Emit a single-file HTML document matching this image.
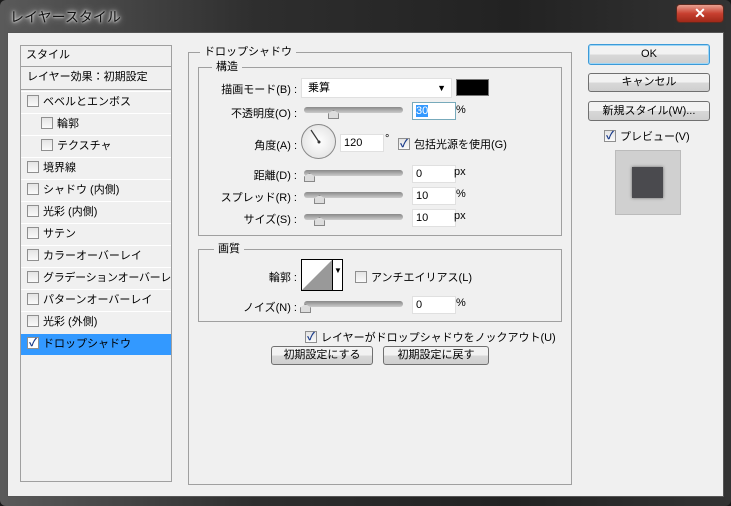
<!DOCTYPE html>
<html><head><meta charset="utf-8"><style>
*{margin:0;padding:0;box-sizing:border-box}
body{width:731px;height:506px;overflow:hidden;background:#1a1a1a;font-family:"Liberation Sans","Noto Sans CJK JP",sans-serif;font-size:11px;color:#000;position:relative;white-space:nowrap}
.a{position:absolute}
.win{left:0;top:0;width:731px;height:506px;background:linear-gradient(90deg,#5a5a5a 0,#2e2e2e 35%,#222 70%,#333 100%);border-radius:6px}
.client{left:7px;top:32px;width:717px;height:465px;background:#f0f0f0;border:1px solid #555}
.title{left:10px;top:7px;font-size:14px;color:#111;text-shadow:0 0 8px #ddd,0 0 4px #eee,0 0 2px #fff}
.close{left:676px;top:4px;width:48px;height:19px;background:linear-gradient(#e8a090,#c84030 50%,#a02818);border:1px solid #5a2a20;border-radius:4px;color:#fff;font-weight:bold;text-align:center;font-size:14px;line-height:17px}
.box{border:1px solid #a0a0a0}
.row{left:21px;width:150px;height:22px;border-top:1px solid #fff;line-height:21px;overflow:hidden}
.cb{display:inline-block;width:12px;height:12px;border:1px solid #8f8f8f;background:linear-gradient(#e4e4e4,#fafafa);vertical-align:middle;margin-right:4px;position:relative;top:-1px;font-size:11px;line-height:10px;text-align:center;color:#1a3b8a;font-weight:bold}
.lbl{text-align:right;width:120px}
.in{background:#fff;border:1px solid #e0e0e0;height:18px;width:44px;line-height:16px;padding-left:3px}
.sl{height:6px;border-radius:3px;background:linear-gradient(#888,#ccc);width:99px}
.th{width:11px;height:9px;background:#ddd;border:1px solid #888;border-radius:2px 2px 0 0;clip-path:polygon(50% 0,100% 40%,100% 100%,0 100%,0 40%)}
.btn{border:1px solid #707070;border-radius:3px;background:linear-gradient(#f2f2f2 50%,#d8d8d8 50%,#cfcfcf);text-align:center}
.leg{background:#f0f0f0;padding:0 4px}
</style></head><body>
<div class="a win"></div>
<div class="a title">レイヤースタイル</div>
<div class="a close">✕</div>
<div class="a client"></div>

<div class="a box" style="left:20px;top:45px;width:152px;height:437px"></div>
<div class="a" style="left:21px;top:46px;width:150px;height:21px;border-bottom:1px solid #a0a0a0;padding-left:5px;line-height:18px">スタイル</div>
<div class="a" style="left:21px;top:67px;width:150px;height:23px;border-bottom:1px solid #a0a0a0;padding-left:6px;line-height:20px">レイヤー効果：初期設定</div>
<div class="a row" style="top:91px;padding-left:6px"><span class="cb"></span>ベベルとエンボス</div>
<div class="a row" style="top:113px;padding-left:20px"><span class="cb"></span>輪郭</div>
<div class="a row" style="top:135px;padding-left:20px"><span class="cb"></span>テクスチャ</div>
<div class="a row" style="top:157px;padding-left:6px"><span class="cb"></span>境界線</div>
<div class="a row" style="top:179px;padding-left:6px"><span class="cb"></span>シャドウ (内側)</div>
<div class="a row" style="top:201px;padding-left:6px"><span class="cb"></span>光彩 (内側)</div>
<div class="a row" style="top:223px;padding-left:6px"><span class="cb"></span>サテン</div>
<div class="a row" style="top:245px;padding-left:6px"><span class="cb"></span>カラーオーバーレイ</div>
<div class="a row" style="top:267px;padding-left:6px;letter-spacing:-0.3px"><span class="cb"></span>グラデーションオーバーレイ</div>
<div class="a row" style="top:289px;padding-left:6px"><span class="cb"></span>パターンオーバーレイ</div>
<div class="a row" style="top:311px;padding-left:6px"><span class="cb"></span>光彩 (外側)</div>
<div class="a row" style="top:334px;padding-left:6px;background:#3399ff;border-top:none;height:21px"><span class="cb" style="background:#fff">✓</span>ドロップシャドウ</div>

<div class="a box" style="left:188px;top:52px;width:384px;height:433px"></div>
<div class="a leg" style="left:200px;top:44px;line-height:16px">ドロップシャドウ</div>
<div class="a box" style="left:198px;top:67px;width:364px;height:169px"></div>
<div class="a leg" style="left:212px;top:59px;line-height:16px">構造</div>

<div class="a lbl" style="left:177px;top:81px">描画モード(B) :</div>
<div class="a" style="left:301px;top:78px;width:151px;height:20px;background:#fff;border:1px solid #e0e0e0;padding-left:6px;line-height:18px">乗算<span style="position:absolute;right:5px;font-size:9px">▼</span></div>
<div class="a" style="left:456px;top:79px;width:33px;height:17px;background:#000;border:1px solid #777"></div>

<div class="a lbl" style="left:177px;top:105px">不透明度(O) :</div>
<div class="a sl" style="left:304px;top:107px"></div>
<div class="a th" style="left:328px;top:110px"></div>
<div class="a in" style="left:412px;top:102px;border-color:#7ab"><span style="background:#3399ff;color:#fff">30</span></div>
<div class="a" style="left:456px;top:104px">%</div>

<div class="a lbl" style="left:177px;top:137px">角度(A) :</div>
<div class="a" style="left:301px;top:124px;width:35px;height:35px;border-radius:50%;border:1px solid #888;background:radial-gradient(#fff,#ddd)"></div>
<svg class="a" style="left:301px;top:124px" width="36" height="36"><line x1="18" y1="18" x2="10" y2="6" stroke="#333" stroke-width="1.2"/><circle cx="18" cy="18" r="1.5" fill="#333"/></svg>
<div class="a in" style="left:340px;top:134px">120</div>
<div class="a" style="left:385px;top:133px">°</div>
<div class="a" style="left:398px;top:136px"><span class="cb">✓</span>包括光源を使用(G)</div>

<div class="a lbl" style="left:177px;top:167px">距離(D) :</div>
<div class="a sl" style="left:304px;top:170px"></div>
<div class="a th" style="left:304px;top:173px"></div>
<div class="a in" style="left:412px;top:165px">0</div>
<div class="a" style="left:454px;top:166px">px</div>

<div class="a lbl" style="left:177px;top:189px">スプレッド(R) :</div>
<div class="a sl" style="left:304px;top:192px"></div>
<div class="a th" style="left:314px;top:195px"></div>
<div class="a in" style="left:412px;top:187px">10</div>
<div class="a" style="left:456px;top:188px">%</div>

<div class="a lbl" style="left:177px;top:211px">サイズ(S) :</div>
<div class="a sl" style="left:304px;top:214px"></div>
<div class="a th" style="left:314px;top:217px"></div>
<div class="a in" style="left:412px;top:209px">10</div>
<div class="a" style="left:454px;top:210px">px</div>

<div class="a box" style="left:198px;top:249px;width:364px;height:73px"></div>
<div class="a leg" style="left:214px;top:241px;line-height:16px">画質</div>
<div class="a lbl" style="left:177px;top:269px">輪郭 :</div>
<div class="a" style="left:301px;top:259px;width:42px;height:32px;border:1px solid #000;background:#fff"></div>
<svg class="a" style="left:302px;top:260px" width="30" height="30"><polygon points="0,30 30,0 30,30" fill="#999"/></svg>
<div class="a" style="left:332px;top:260px;width:1px;height:30px;background:#000"></div>
<div class="a" style="left:334px;top:266px;font-size:8px">▼</div>
<div class="a" style="left:355px;top:269px"><span class="cb"></span>アンチエイリアス(L)</div>
<div class="a lbl" style="left:177px;top:299px">ノイズ(N) :</div>
<div class="a sl" style="left:304px;top:301px"></div>
<div class="a th" style="left:300px;top:304px"></div>
<div class="a in" style="left:412px;top:296px">0</div>
<div class="a" style="left:456px;top:297px">%</div>

<div class="a" style="left:305px;top:329px"><span class="cb">✓</span>レイヤーがドロップシャドウをノックアウト(U)</div>
<div class="a btn" style="left:271px;top:346px;width:102px;height:19px;line-height:17px">初期設定にする</div>
<div class="a btn" style="left:383px;top:346px;width:106px;height:19px;line-height:17px">初期設定に戻す</div>

<div class="a btn" style="left:588px;top:44px;width:122px;height:21px;line-height:19px;border-color:#3c9ad8;box-shadow:inset 0 0 0 1px #9fd6f5">OK</div>
<div class="a btn" style="left:588px;top:73px;width:122px;height:19px;line-height:17px">キャンセル</div>
<div class="a btn" style="left:588px;top:101px;width:122px;height:20px;line-height:18px">新規スタイル(W)...</div>
<div class="a" style="left:604px;top:128px"><span class="cb">✓</span>プレビュー(V)</div>
<div class="a" style="left:615px;top:150px;width:66px;height:65px;background:#d0d0d0;border:1px solid #bbb"></div>
<div class="a" style="left:632px;top:167px;width:31px;height:31px;background:#4a4a4e;box-shadow:0 0 3px #666"></div>
</body></html>
